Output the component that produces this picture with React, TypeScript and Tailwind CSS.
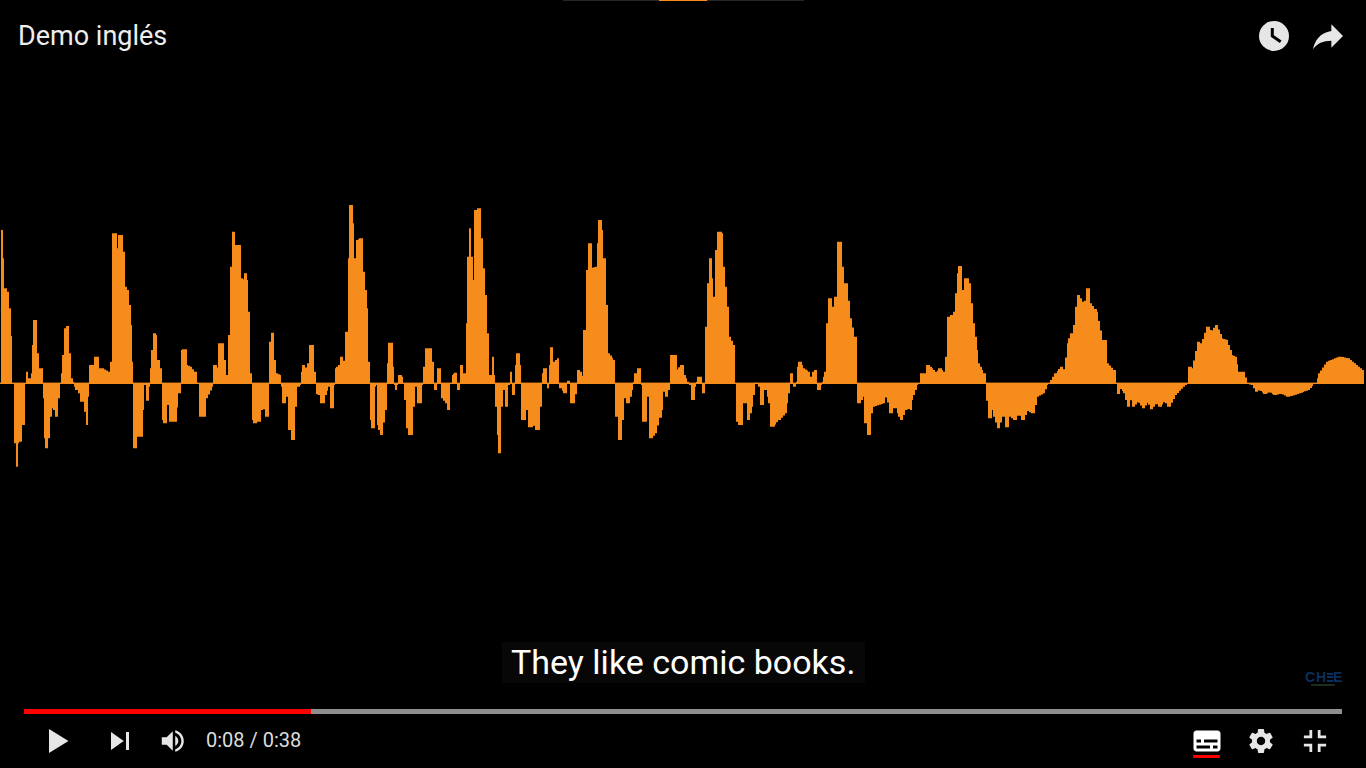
import React from "react";

// envelope points read off the three crops, [offset, "x,y x,y ..."]
const chunks: [number, string][] = [
  [0, `3,580 3,120 8,120 8,205 12,205 12,295 20,305 27,310 27,355 33,355 33,438 37,438 37,580
  42,580 42,760 47,760 50,830 53,760 58,755 65,705 70,705 75,580
  77,580 77,545 85,545 85,565 93,570 97,550 100,465 104,390 110,390 112,490 118,535 124,535 128,580
  132,625 135,745 140,775 145,745 150,680 155,650 165,660 170,680 175,625 180,580
  182,580 186,550 192,495 197,415 205,408 208,490 212,565 218,575 222,580
  226,590 240,610 245,635 252,625 258,665 262,705 265,620 268,580
  270,525 278,525 282,540 288,500 294,500 297,540 305,535 325,545 330,570 335,515 336,310 340,130 347,130 350,175 355,175 360,135 365,135 370,185 375,290 382,300 388,345 392,405 396,515 398,580
  400,675 405,775 410,720 415,740 425,740 428,660 433,580
  437,585 442,632 447,590 450,580
  452,535 458,480 462,430 468,435 472,510 480,535 485,580
  487,580 490,690 495,700 500,645 507,645 512,695 525,695 535,610 543,580
  547,480 555,478 560,525 570,530 583,545 590,580
  598,580 605,680 612,680 617,625 635,590 640,580
  645,525 655,540 662,460 670,460 672,510 678,555 685,555 690,435 695,230 698,125 702,125 705,205 712,165 718,165 722,265 733,270 737,250 742,270 745,365 750,550 755,580
  758,690 765,700 770,660 775,695 783,660 790,635 800,680 806,580
  808,580 812,455 818,428 822,510 828,550 840,555 843,580
  845,590 848,640 855,640 858,595 865,620 872,720 878,750 884,650 892,590 900,585
  903,580 905,545 910,525 915,545 928,520 932,465 940,465 942,545 947,580
  948,585 950,612 960,615 968,640 975,615 985,590 990,590 995,655 1002,585
  1005,580 1007,535 1020,525 1025,500 1035,525 1043,425 1048,205 1052,45 1058,100 1063,205 1068,230 1073,150 1082,145 1090,245 1100,355 1105,515 1110,580
  1113,690 1120,715 1124,590 1128,580 1132,585 1135,705 1145,735 1155,660 1162,580
  1165,520 1172,458 1178,530 1183,580
  1185,585 1188,600 1192,585
  1193,580 1197,555 1205,560 1208,580
  1212,580 1218,630 1225,715 1232,735 1240,650 1245,580 1250,590 1258,640 1265,585
  1268,580 1275,530 1280,475 1288,475 1295,515 1302,580
  1303,585 1306,600 1310,585
  1312,580 1312,535 1320,535 1322,580
  1322,600 1330,625 1340,640 1345,660 1350,585 1350,580`],
  [450, `5,580 8,555 18,548 22,580 22,585 28,600 30,580
  30,550 35,525 40,550 48,550 50,400 57,200 60,115 63,200 68,270 72,270 80,60 88,55 92,145 98,235 105,315 112,430 117,555 125,555 125,500 130,500 132,555 135,580
  140,650 145,735 148,790 152,650 158,590 165,600 170,650 175,585 180,580
  178,545 183,545 186,580 190,615 195,585
  197,525 205,490 210,525 213,580
  220,690 228,660 235,660 242,712 250,695 262,720 270,650 275,580
  278,550 285,535 290,575 293,595 296,580
  300,525 305,472 310,520 325,505 328,580
  335,595 345,610 352,580 352,572 360,572 360,580
  362,640 370,640 380,585
  383,540 390,545 400,570 408,420 415,240 420,160 425,235 440,230 450,90 455,120 460,205 468,345 475,490 490,510 496,580
  503,680 510,750 515,690 522,610 535,640 545,600 550,580
  552,575 560,550 567,535 572,580
  575,585 582,695 590,620 598,620 605,745 615,730 635,660 640,590 650,620 660,580
  665,495 672,495 680,545 695,525 703,555 712,575 718,580
  722,585 730,630 735,590 738,580
  740,575 747,560 755,580
  757,590 760,610 765,580
  770,410 778,280 782,205 785,265 790,320 795,320 800,180 808,125 815,130 820,230 830,350 838,440 850,465 855,580
  857,580 865,695 870,705 878,640 890,640 896,690 905,650 915,580
  918,578 925,580
  930,590 935,645 942,600 950,600 960,640 968,710 985,690 1005,670 1020,580
  1025,550 1030,580 1035,590 1038,580
  1040,575 1045,530 1050,515 1060,535 1075,545 1085,575 1093,545 1100,540 1102,580
  1108,600 1112,585 1115,580
  1118,575 1128,545 1135,400 1140,325 1145,350 1152,375 1160,320 1165,155 1172,155 1175,230 1182,285 1190,280 1200,385 1212,440 1220,550 1222,580
  1228,640 1238,620 1243,620 1250,700 1255,735 1262,670 1270,650 1300,640 1310,605 1322,670 1335,640 1345,670 1355,690 1365,660 1380,655`],
  [900, `30,660 35,630 50,585 55,580
  60,580 65,550 72,550 78,580 85,525 95,535 110,550 120,535 135,550 142,500 150,380 155,375 160,420 170,310 175,250 182,228 186,300 192,325 200,265 208,280 220,400 235,520 250,550 258,580
  268,685 275,640 285,680 295,715 305,680 315,680 320,712 328,675 345,690 358,665 370,690 380,660 400,670 410,620 430,610 440,585 445,580
  450,580 470,550 485,530 495,545 505,460 515,430 520,460 530,350 535,315 545,335 552,370 562,295 570,340 590,365 605,450 615,450 620,520 640,540 648,580
  652,580 655,612 660,590 675,610 685,650 690,612 700,650 715,630 730,655 745,630 755,658 770,635 780,650 795,630 805,650 825,615 850,590 862,580
  865,580 870,530 880,540 895,455 905,465 925,410 935,430 950,405 965,445 980,450 995,495 1005,500 1015,545 1030,545 1040,580
  1060,585 1070,605 1080,598 1095,612 1110,605 1125,615 1145,610 1165,620 1190,612 1225,600 1240,582
  1250,580 1260,550 1285,515 1320,500 1345,505 1375,530 1392,545 1392,580`],
];

const rawPoints: [number, number][] = chunks.flatMap(([off, str]) =>
  str
    .trim()
    .split(/\s+/)
    .map((p): [number, number] => {
      const [x, y] = p.split(",").map(Number);
      return [off + x / 3, 190 + y / 3];
    })
);

// the wave in the video is blocky, so walk the outline in stairs about 2px wide
function stepped(points: [number, number][]) {
  const out: string[] = [`${Math.round(points[0][0])},${points[0][1].toFixed(1)}`];
  for (let i = 0; i < points.length - 1; i++) {
    const [x1, y1] = points[i];
    const [x2, y2] = points[i + 1];
    const steps = Math.max(1, Math.round(Math.abs(x2 - x1) / 2));
    for (let s = 0; s < steps; s++) {
      const xa = Math.round(x1 + ((x2 - x1) * s) / steps);
      const xb = Math.round(x1 + ((x2 - x1) * (s + 1)) / steps);
      const ya = y1 + ((y2 - y1) * s) / steps;
      const yb = y1 + ((y2 - y1) * (s + 1)) / steps;
      // keep whichever edge lies further from the centre line
      const y = Math.abs(ya - 383.3) > Math.abs(yb - 383.3) ? ya : yb;
      out.push(`${xa},${y.toFixed(1)}`, `${xb},${y.toFixed(1)}`);
    }
    out.push(`${Math.round(x2)},${y2.toFixed(1)}`);
  }
  return out.join(" ");
}

function Waveform() {
  return (
    <svg viewBox="0 72 1366 637" className="block w-full h-full">
      <polygon points={stepped(rawPoints)} fill="#f68c1c" />
      <rect x="0" y="382.6" width="1364" height="1.4" fill="#f68c1c" />
    </svg>
  );
}

function App() {
  return (
    <div className="relative flex h-[768px] w-[1366px] flex-col overflow-hidden bg-black font-['Roboto',sans-serif]">
      {/* top chapter strip */}
      <div className="mx-auto flex h-px w-[241px] shrink-0 bg-[#262626]">
        <div className="ml-[96px] h-px w-[48px] bg-[#f68c1c]" />
      </div>

      <div className="flex h-[71px] shrink-0 items-center pb-[1px] pl-[18px]">
        <span className="text-[27px] leading-none text-[#eeeeee]">Demo inglés</span>
        <svg viewBox="0 0 30 30" className="ml-auto h-[30px] w-[30px]">
          <circle cx="15" cy="15" r="15" fill="#e6e6e6" />
          <path d="M13.3 7v8l8.4 5.7" fill="none" stroke="#000" strokeWidth="3" />
        </svg>
        <svg viewBox="0 0 24 24" className="ml-[19px] mr-[18px] -mt-[1px] h-[40px] w-[40px]">
          <path d="M14 9V5l7 7-7 7v-4.1c-5 0-8.5 1.6-11 5.1 1-5 4-10 11-11z" fill="#e6e6e6" />
        </svg>
      </div>

      <div className="relative min-h-0 flex-1">
        <Waveform />
        <div className="absolute left-[502px] top-[570px] flex h-[41px] w-[363px] items-center bg-[#070707] pb-[2px] pl-[9px] text-[34px] leading-none whitespace-nowrap text-white">
          They like comic books.
        </div>
        <div className="absolute left-[1305px] top-[600px] flex flex-col items-center font-['Liberation_Sans',sans-serif]">
          <div className="flex h-[10px] items-center text-[14px] leading-none font-bold text-[#0b2f5c]">
            <span className="w-[11px]">C</span>
            <span className="w-[11px]">H</span>
            <div className="flex h-[9px] w-[6px] flex-col justify-between">
              <div className="h-[2px] bg-[#0b2f5c]" />
              <div className="h-[2px] bg-[#0b2f5c]" />
              <div className="h-[2px] bg-[#0b2f5c]" />
            </div>
            <span className="w-[8px]">E</span>
          </div>
          <div className="mt-[2px] h-[2px] w-[24px] bg-[#1e2a1c]" />
        </div>
      </div>

      {/* progress */}
      <div className="mx-[24px] flex h-[5px] shrink-0 bg-[#8f8f8f]">
        <div className="h-full w-[287px] bg-[#ff0000]" />
      </div>

      {/* controls */}
      <div className="flex h-[54px] shrink-0 items-center text-[#e6e6e6]">
        <svg viewBox="0 0 36 36" className="ml-[31px] h-[54px] w-[54px]" fill="#e6e6e6">
          <path d="M12 26l6.5-4v-8L12 10zM18.5 22l6.5-4-6.5-4z" />
        </svg>
        <svg viewBox="0 0 36 36" className="ml-[8px] h-[54px] w-[54px]" fill="#e6e6e6">
          <path d="M12 24l8.5-6L12 12zM22 12v12h2V12z" />
        </svg>
        <svg viewBox="0 0 36 36" className="ml-[5px] h-[44px] w-[44px]" fill="#e6e6e6">
          <path d="M8 21h4l5 5V10l-5 5H8zM19 14v8c1.48-.68 2.5-2.23 2.5-4 0-1.74-1.02-3.26-2.5-4zM19 11.29c2.89.86 5 3.54 5 6.71s-2.11 5.85-5 6.71v2.06c4.01-.91 7-4.49 7-8.77s-2.99-7.86-7-8.77z" />
        </svg>
        <span className="ml-[10px] pb-[2px] text-[20px] leading-none whitespace-nowrap text-[#dddddd]">0:08 / 0:38</span>

        <div className="relative ml-auto h-[54px] w-[54px]">
          <svg viewBox="0 0 36 36" className="h-[54px] w-[54px]" fill="#ffffff">
            <path
              fillRule="evenodd"
              d="M11 11c-1.1 0-2 .9-2 2v10c0 1.1.9 2 2 2h14c1.1 0 2-.9 2-2V13c0-1.1-.9-2-2-2H11zM11 17h3v2h-3zM20 23h-9v-2h9zM25 23h-3v-2h3zM25 19h-9v-2h9z"
            />
          </svg>
          <div className="absolute left-[13px] top-[41px] h-[3px] w-[27px] rounded-[1px] bg-[#ff0000]" />
        </div>
        <svg viewBox="0 0 36 36" className="h-[54px] w-[54px]" fill="#e6e6e6">
          <path d="m23.94 18.78c.03-.25.05-.51.05-.78 0-.27-.02-.52-.05-.78l1.68-1.32c.15-.12.19-.33.09-.51l-1.6-2.76c-.09-.17-.31-.24-.48-.17l-1.99.8c-.41-.32-.86-.58-1.35-.78l-.3-2.12c-.02-.19-.19-.33-.39-.33h-3.2c-.2 0-.36.14-.39.33l-.3 2.12c-.48.2-.93.47-1.35.78l-1.99-.8c-.18-.07-.39 0-.48.17l-1.6 2.76c-.1.17-.05.39.09.51l1.68 1.32c-.03.25-.05.52-.05.78s.02.52.05.78l-1.68 1.32c-.15.12-.19.33-.09.51l1.6 2.76c.09.17.31.24.48.17l1.99-.8c.41.32.86.58 1.35.78l.3 2.12c.02.19.19.33.39.33h3.2c.2 0 .36-.14.39-.33l.3-2.12c.48-.2.93-.47 1.35-.78l1.99.8c.18.07.39 0 .48-.17l1.6-2.76c.09-.17.05-.39-.09-.51zm-5.94 2.01c-1.54 0-2.8-1.25-2.8-2.8 0-1.54 1.25-2.8 2.8-2.8 1.54 0 2.8 1.25 2.8 2.8 0 1.54-1.25 2.8-2.8 2.8z" />
        </svg>
        <svg viewBox="0 0 36 36" className="ml-[2px] mr-[26px] h-[50px] w-[50px]" fill="#e6e6e6">
          <path d="M14 14h-4v2h6v-6h-2zM22 14v-4h-2v6h6v-2zM20 26h2v-4h4v-2h-6zM10 22h4v4h2v-6h-6z" />
        </svg>
      </div>
    </div>
  );
}

export default App;
